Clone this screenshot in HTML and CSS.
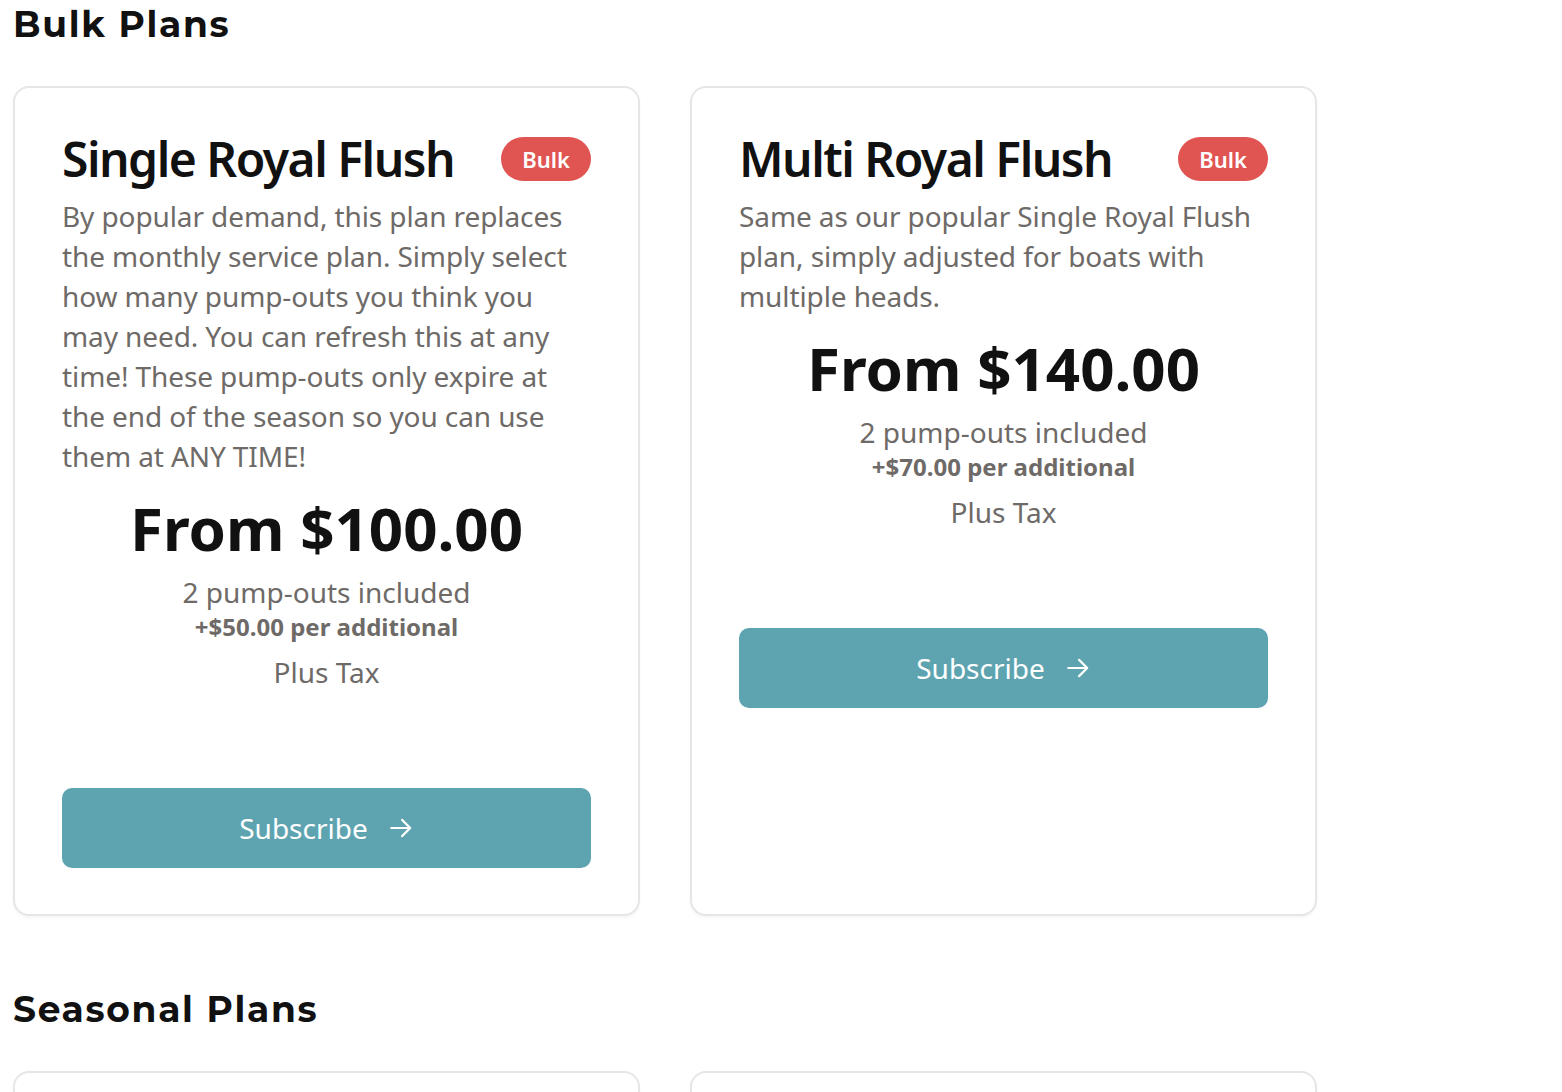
FILE: index.html
```html
<!DOCTYPE html>
<html lang="en">
<head>
<meta charset="utf-8">
<title>Plans</title>
<link rel="stylesheet" href="styles.css">
</head>
<body>
<main class="page">
  <section class="plan-section">
    <h2 class="section-title">Bulk Plans</h2>
    <div class="plan-grid">
      <article class="plan-card">
        <div class="plan-head">
          <h3 class="plan-name">Single Royal Flush</h3>
          <span class="badge">Bulk</span>
        </div>
        <p class="plan-desc">By popular demand, this plan replaces the monthly service plan. Simply select how many pump-outs you think you may need. You can refresh this at any time! These pump-outs only expire at the end of the season so you can use them at ANY TIME!</p>
        <div class="plan-price">From $100.00</div>
        <div class="plan-included">2 pump-outs included</div>
        <div class="plan-extra">+$50.00 per additional</div>
        <div class="plan-tax">Plus Tax</div>
        <a class="btn" href="#">Subscribe
          <svg class="btn-icon" viewBox="0 0 24 24" width="24" height="24" aria-hidden="true"><path d="M3 12h17M13 4.5l7.5 7.5-7.5 7.5" fill="none" stroke="currentColor" stroke-width="2" stroke-linecap="round" stroke-linejoin="round"/></svg>
        </a>
      </article>
      <article class="plan-card">
        <div class="plan-head">
          <h3 class="plan-name">Multi Royal Flush</h3>
          <span class="badge">Bulk</span>
        </div>
        <p class="plan-desc">Same as our popular Single Royal Flush plan, simply adjusted for boats with multiple heads.</p>
        <div class="plan-price">From $140.00</div>
        <div class="plan-included">2 pump-outs included</div>
        <div class="plan-extra">+$70.00 per additional</div>
        <div class="plan-tax">Plus Tax</div>
        <a class="btn" href="#">Subscribe
          <svg class="btn-icon" viewBox="0 0 24 24" width="24" height="24" aria-hidden="true"><path d="M3 12h17M13 4.5l7.5 7.5-7.5 7.5" fill="none" stroke="currentColor" stroke-width="2" stroke-linecap="round" stroke-linejoin="round"/></svg>
        </a>
      </article>
    </div>
  </section>
  <section class="plan-section plan-section--next">
    <h2 class="section-title">Seasonal Plans</h2>
    <div class="plan-grid">
      <article class="plan-card plan-card--empty"></article>
      <article class="plan-card plan-card--empty"></article>
    </div>
  </section>
</main>
</body>
</html>
```
FILE: styles.css
```css
* { box-sizing: border-box; }
html, body { margin: 0; padding: 0; background: #fff; }
body {
  font-family: "Noto Sans", "Open Sans", sans-serif;
  color: #111;
}
.page { padding: 2px 13px 0; }
.section-title {
  font-family: "Montserrat", "Inter", "Lato", sans-serif;
  font-weight: 700;
  font-size: 36px;
  line-height: 44px;
  letter-spacing: 1.7px;
  margin: 0 0 40px;
  color: #111;
}
.plan-section--next .section-title { margin-top: 71px; }
.plan-grid {
  display: grid;
  grid-template-columns: 627px 627px;
  column-gap: 50px;
}
.plan-card {
  border: 2px solid #e6e6e6;
  border-radius: 16px;
  padding: 45px 47px 46px;
  background: #fff;
  box-shadow: 0 2px 3px rgba(0,0,0,0.04);
  display: flex;
  flex-direction: column;
}
.plan-card--empty { min-height: 400px; }
.plan-head {
  display: flex;
  justify-content: space-between;
  align-items: center;
  min-height: 52px;
}
.plan-name {
  margin: 0;
  font-size: 48px;
  font-weight: 600;
  line-height: 52px;
  letter-spacing: -1.5px;
  color: #111;
}
.badge {
  display: inline-flex;
  align-items: center;
  height: 44px;
  padding: 0 21px;
  border-radius: 22px;
  background: #e05551;
  color: #fff;
  font-size: 22px;
  font-weight: 600;
}
.plan-desc {
  margin: 11px 0 0;
  font-size: 28px;
  line-height: 40px;
  letter-spacing: -0.1px;
  color: #6e6a67;
}
.plan-price {
  margin-top: 16px;
  text-align: center;
  font-size: 60px;
  font-weight: 700;
  line-height: 72px;
  color: #111;
}
.plan-included {
  margin-top: 10px;
  text-align: center;
  font-size: 28px;
  line-height: 36px;
  color: #6e6a67;
}
.plan-extra {
  margin-top: 1px;
  text-align: center;
  font-size: 24px;
  font-weight: 700;
  line-height: 32px;
  color: #6e6a67;
}
.plan-tax {
  margin-top: 11px;
  text-align: center;
  font-size: 28px;
  line-height: 36px;
  color: #6e6a67;
}
.btn {
  margin-top: 98px;
  height: 80px;
  border-radius: 10px;
  background: #5ea4b0;
  color: #fff;
  text-decoration: none;
  font-size: 28px;
  display: flex;
  align-items: center;
  justify-content: center;
  gap: 20px;
}
.btn-icon { width: 26px; height: 26px; }
```
